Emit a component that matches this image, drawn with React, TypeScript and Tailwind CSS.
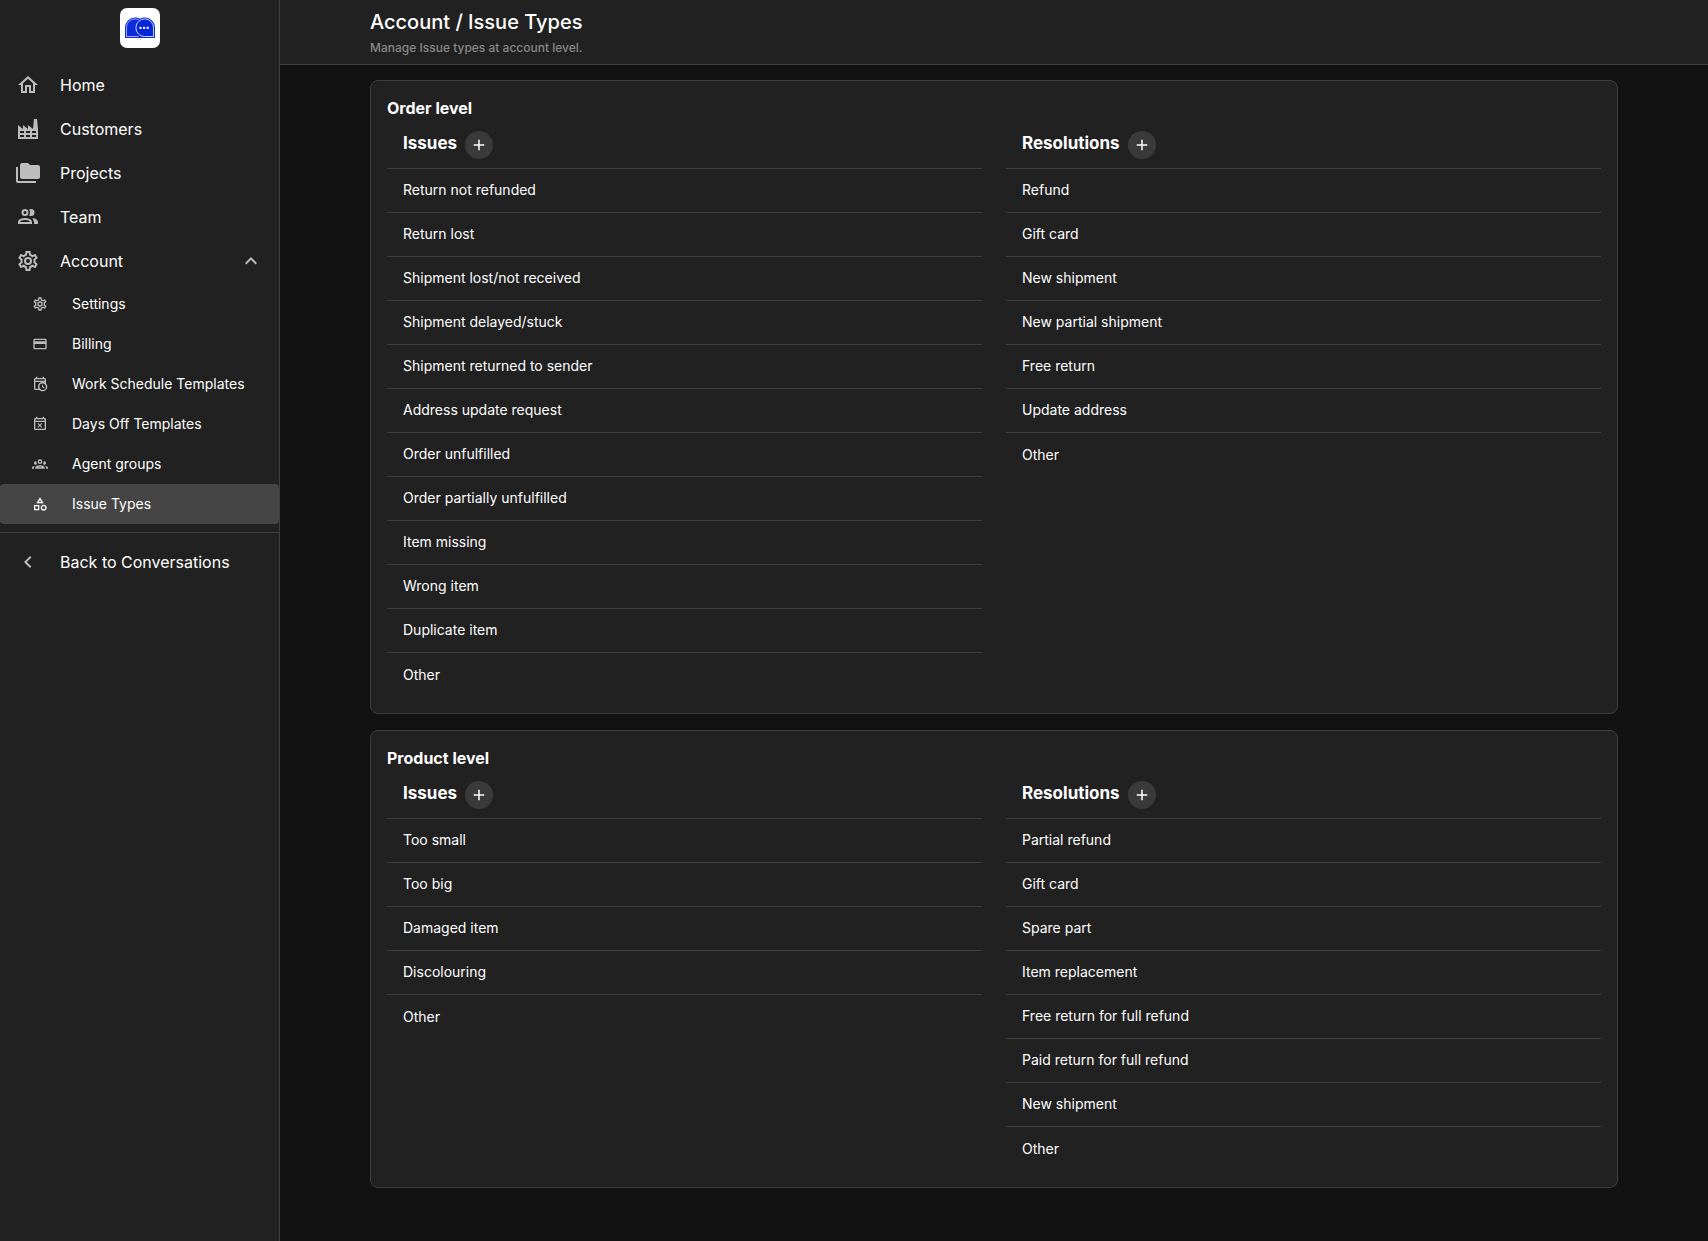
import { useState } from 'react';
import type { ComponentType } from 'react';
import {
  MdAdd,
  MdChevronLeft,
  MdExpandLess,
  MdExpandMore,
  MdOutlineCategory,
  MdOutlineCreditCard,
  MdOutlineEventBusy,
  MdOutlineHome,
} from 'react-icons/md';

type IconProps = { className?: string };
type IconType = ComponentType<IconProps>;

function Icon({ d, className }: IconProps & { d: string }) {
  return (
    <svg viewBox="0 0 24 24" fill="currentColor" className={className} aria-hidden="true">
      <path fillRule="evenodd" d={d} />
    </svg>
  );
}

function FactoryIcon({ className }: IconProps) {
  return (
    <Icon
      className={className}
      d="M4 18v2h4v-2H4m0-4v2h4v-2H4m6 0v2h4v-2h-4m6 0v2h4v-2h-4m-6 4v2h4v-2h-4m6 0v2h4v-2h-4M2 22V8l5 4V8l5 4V8l5 4 1-10h3l1 10v10H2Z"
    />
  );
}

function FoldersIcon({ className }: IconProps) {
  return (
    <Icon
      className={className}
      d="M22 4h-8l-2-2H6a2 2 0 0 0-2 2v12a2 2 0 0 0 2 2h16a2 2 0 0 0 2-2V6a2 2 0 0 0-2-2M2 6H0v14a2 2 0 0 0 2 2h18v-2H2V6Z"
    />
  );
}

function PeopleIcon({ className }: IconProps) {
  return (
    <Icon
      className={className}
      d="M13.07 10.41A5 5 0 0 0 13.07 4.59A3.39 3.39 0 0 1 15 4A3.5 3.5 0 0 1 15 11A3.39 3.39 0 0 1 13.07 10.41M5.5 7.5A3.5 3.5 0 1 1 9 11A3.5 3.5 0 0 1 5.5 7.5M7.5 7.5A1.5 1.5 0 1 0 9 6A1.5 1.5 0 0 0 7.5 7.5M16 17V19H2V17S2 13 9 13 16 17 16 17M14 17C13.86 16.22 12.67 15 9 15S4.07 16.31 4 17M15.95 13A5.32 5.32 0 0 1 18 17V19H22V17S22 13.37 15.94 13Z"
    />
  );
}

function CogIcon({ className }: IconProps) {
  return (
    <Icon
      className={className}
      d="M12 8A4 4 0 0 1 16 12A4 4 0 0 1 12 16A4 4 0 0 1 8 12A4 4 0 0 1 12 8M12 10A2 2 0 0 0 10 12A2 2 0 0 0 12 14A2 2 0 0 0 14 12A2 2 0 0 0 12 10M10 22C9.75 22 9.54 21.82 9.5 21.58L9.13 18.93C8.5 18.68 7.96 18.34 7.44 17.94L4.95 18.95C4.73 19.03 4.46 18.95 4.34 18.73L2.34 15.27C2.21 15.05 2.27 14.78 2.46 14.63L4.57 12.97L4.5 12L4.57 11L2.46 9.37C2.27 9.22 2.21 8.95 2.34 8.73L4.34 5.27C4.46 5.05 4.73 4.96 4.95 5.05L7.44 6.05C7.96 5.66 8.5 5.32 9.13 5.07L9.5 2.42C9.54 2.18 9.75 2 10 2H14C14.25 2 14.46 2.18 14.5 2.42L14.87 5.07C15.5 5.32 16.04 5.66 16.56 6.05L19.05 5.05C19.27 4.96 19.54 5.05 19.66 5.27L21.66 8.73C21.79 8.95 21.73 9.22 21.54 9.37L19.43 11L19.5 12L19.43 13L21.54 14.63C21.73 14.78 21.79 15.05 21.66 15.27L19.66 18.73C19.54 18.95 19.27 19.04 19.05 18.95L16.56 17.95C16.04 18.34 15.5 18.68 14.87 18.93L14.5 21.58C14.46 21.82 14.25 22 14 22H10M11.25 4L10.88 6.61C9.68 6.86 8.62 7.5 7.85 8.39L5.44 7.35L4.69 8.65L6.8 10.2C6.4 11.37 6.4 12.64 6.8 13.8L4.68 15.36L5.43 16.66L7.86 15.62C8.63 16.5 9.68 17.14 10.87 17.38L11.24 20H12.76L13.13 17.39C14.32 17.14 15.37 16.5 16.14 15.62L18.57 16.66L19.32 15.36L17.2 13.81C17.6 12.64 17.6 11.37 17.2 10.2L19.31 8.65L18.56 7.35L16.15 8.39C15.38 7.5 14.32 6.86 13.12 6.62L12.75 4H11.25Z"
    />
  );
}

function CalendarClockIcon({ className }: IconProps) {
  return (
    <Icon
      className={className}
      d="M15 13h1.5v2.82l2.44 1.41-.75 1.3L15 16.69V13m4-4H5v10h4.67c-.43-.91-.67-1.93-.67-3a7 7 0 0 1 7-7c1.07 0 2.09.24 3 .67V9M5 5v2h14V5H5m0 16a2 2 0 0 1-2-2V5c0-1.11.89-2 2-2h1V1h2v2h8V1h2v2h1a2 2 0 0 1 2 2v6.1c1.24 1.26 2 2.99 2 4.9a7 7 0 0 1-7 7c-1.91 0-3.64-.76-4.9-2H5m11-9.85A4.85 4.85 0 0 0 11.15 16c0 2.68 2.17 4.85 4.85 4.85A4.85 4.85 0 0 0 20.85 16c0-2.68-2.17-4.85-4.85-4.85Z"
    />
  );
}

function GroupIcon({ className }: IconProps) {
  return (
    <Icon
      className={className}
      d="M12 5A3.5 3.5 0 0 0 8.5 8.5A3.5 3.5 0 0 0 12 12A3.5 3.5 0 0 0 15.5 8.5A3.5 3.5 0 0 0 12 5M12 7A1.5 1.5 0 0 1 13.5 8.5A1.5 1.5 0 0 1 12 10A1.5 1.5 0 0 1 10.5 8.5A1.5 1.5 0 0 1 12 7M5.5 8A2.5 2.5 0 0 0 3 10.5C3 11.44 3.53 12.25 4.29 12.68C4.65 12.88 5.06 13 5.5 13C5.94 13 6.35 12.88 6.71 12.68C7.08 12.47 7.39 12.17 7.62 11.81C6.89 10.86 6.5 9.7 6.5 8.5V8.22C6.2 8.08 5.86 8 5.5 8M18.5 8C18.14 8 17.8 8.08 17.5 8.22V8.5C17.5 9.7 17.11 10.86 16.38 11.81C16.5 12 16.63 12.15 16.78 12.3C16.94 12.45 17.1 12.58 17.29 12.68C17.65 12.88 18.06 13 18.5 13C18.94 13 19.35 12.88 19.71 12.68C20.47 12.25 21 11.44 21 10.5A2.5 2.5 0 0 0 18.5 8M12 14C9.66 14 5 15.17 5 17.5V19H19V17.5C19 15.17 14.34 14 12 14M4.71 14.55C2.78 14.78 0 15.76 0 17.5V19H3V17.07C3 16.06 3.69 15.22 4.71 14.55M19.29 14.55C20.31 15.22 21 16.06 21 17.07V19H24V17.5C24 15.76 21.22 14.78 19.29 14.55M12 16C13.53 16 15.24 16.5 16.23 17H7.77C8.76 16.5 10.47 16 12 16Z"
    />
  );
}

function Logo() {
  return (
    <svg viewBox="0 0 40 40" className="size-10" role="img" aria-label="Logo">
      <rect width="40" height="40" rx="7" fill="#fff" />
      <path
        d="M5 30V19.5A10 10 0 0 1 15 9.5C17 9.500 18.600 9.900 20 10.600C21.400 9.900 23 9.500 25 9.500A10 10 0 0 1 35 19.500V30Z"
        fill="#0b2bdc"
      />
      <path
        d="M18.500 28.500H6.500V19.500A8.500 8.500 0 0 1 18.500 11.700"
        fill="none"
        stroke="#c5cef8"
        strokeWidth=".8"
      />
      <path
        d="M33.500 28.500H24.500A8.800 8.800 0 1 1 33.500 19.700Z"
        fill="#0624d8"
        stroke="#dfe4fc"
        strokeWidth=".9"
      />
      <g fill="#fff">
        <rect x="19.300" y="18.800" width="2.300" height="2.300" rx=".8" />
        <rect x="22.900" y="18.800" width="2.300" height="2.300" rx=".8" />
        <rect x="26.500" y="18.800" width="2.300" height="2.300" rx=".8" />
      </g>
    </svg>
  );
}

const mainItems: { label: string; icon: IconType }[] = [
  { label: 'Home', icon: MdOutlineHome },
  { label: 'Customers', icon: FactoryIcon },
  { label: 'Projects', icon: FoldersIcon },
  { label: 'Team', icon: PeopleIcon },
];

const accountItems: { label: string; icon: IconType; active?: boolean }[] = [
  { label: 'Settings', icon: CogIcon },
  { label: 'Billing', icon: MdOutlineCreditCard },
  { label: 'Work Schedule Templates', icon: CalendarClockIcon },
  { label: 'Days Off Templates', icon: MdOutlineEventBusy },
  { label: 'Agent groups', icon: GroupIcon },
  { label: 'Issue Types', icon: MdOutlineCategory, active: true },
];

const levels = [
  {
    title: 'Order level',
    issues: [
      'Return not refunded',
      'Return lost',
      'Shipment lost/not received',
      'Shipment delayed/stuck',
      'Shipment returned to sender',
      'Address update request',
      'Order unfulfilled',
      'Order partially unfulfilled',
      'Item missing',
      'Wrong item',
      'Duplicate item',
      'Other',
    ],
    resolutions: [
      'Refund',
      'Gift card',
      'New shipment',
      'New partial shipment',
      'Free return',
      'Update address',
      'Other',
    ],
  },
  {
    title: 'Product level',
    issues: ['Too small', 'Too big', 'Damaged item', 'Discolouring', 'Other'],
    resolutions: [
      'Partial refund',
      'Gift card',
      'Spare part',
      'Item replacement',
      'Free return for full refund',
      'Paid return for full refund',
      'New shipment',
      'Other',
    ],
  },
];

function Sidebar() {
  const [open, setOpen] = useState(true);

  return (
    <aside className="w-70 shrink-0 border-r border-[#3e3e3e] bg-[#212121]">
      <div className="flex justify-center pt-2 pb-4">
        <Logo />
      </div>
      <nav>
        {mainItems.map(({ label, icon: ItemIcon }) => (
          <a key={label} href="#" className="flex h-11 items-center gap-5 px-4 pb-0.5">
            <ItemIcon className="size-6 shrink-0 text-[#bdbdbd]" />
            {label}
          </a>
        ))}
        <button
          onClick={() => setOpen(!open)}
          aria-expanded={open}
          className="flex h-11 w-full items-center gap-5 px-4 pb-0.5"
        >
          <CogIcon className="size-6 shrink-0 text-[#bdbdbd]" />
          <span className="flex-1 text-left">Account</span>
          {open ? (
            <MdExpandLess className="size-6 text-[#bdbdbd]" />
          ) : (
            <MdExpandMore className="size-6 text-[#bdbdbd]" />
          )}
        </button>
        {open && (
          <div className="text-sm">
            {accountItems.map(({ label, icon: ItemIcon, active }) => (
              <a
                key={label}
                href="#"
                className={`flex h-10 items-center gap-6 rounded px-8 whitespace-nowrap ${active ? 'bg-[#454545]' : ''}`}
              >
                <ItemIcon className={`size-4 shrink-0 ${active ? 'text-white' : 'text-[#bdbdbd]'}`} />
                {label}
              </a>
            ))}
          </div>
        )}
        <hr className="my-2 border-[#3e3e3e]" />
        <a href="#" className="flex h-11 items-center gap-5 px-4 pb-0.5">
          <MdChevronLeft className="size-6 shrink-0 text-[#bdbdbd]" />
          Back to Conversations
        </a>
      </nav>
    </aside>
  );
}

function IssueList({ title, items }: { title: string; items: string[] }) {
  return (
    <section className="min-w-0 flex-1">
      <div className="flex h-12 items-start gap-2 border-b border-[#3e3e3e] px-4 pt-2.5">
        <h3 className="text-[17px] leading-6 font-bold">{title}</h3>
        <button
          aria-label={`Add to ${title}`}
          className="flex size-7 items-center justify-center rounded-full bg-[#3a3a3a]"
        >
          <MdAdd className="size-[18px]" />
        </button>
      </div>
      <ul className="text-sm">
        {items.map((item) => (
          <li
            key={item}
            className="flex h-11 items-center border-b border-[#3e3e3e] px-4 pb-0.5 last:border-b-0 last:pb-0"
          >
            {item}
          </li>
        ))}
      </ul>
    </section>
  );
}

export default function App() {
  return (
    <div className="flex min-h-screen bg-[#121212] font-['Inter','Liberation_Sans',sans-serif] text-base text-white">
      <Sidebar />
      <main className="min-w-0 flex-1">
        <header className="border-b border-[#3e3e3e] bg-[#212121]">
          <div className="mx-auto max-w-7xl px-4 py-2">
            <h1 className="text-xl font-medium">Account / Issue Types</h1>
            <p className="mt-1 text-xs font-medium text-[#888888]">Manage Issue types at account level.</p>
          </div>
        </header>
        <div className="mx-auto flex max-w-7xl flex-col gap-4 px-4 pt-[15px] pb-8">
          {levels.map(({ title, issues, resolutions }) => (
            <section key={title} className="rounded-lg border border-[#3e3e3e] bg-[#212121] p-4">
              <h2 className="pb-0.5 leading-[22px] font-bold">{title}</h2>
              <div className="flex gap-6">
                <IssueList title="Issues" items={issues} />
                <IssueList title="Resolutions" items={resolutions} />
              </div>
            </section>
          ))}
        </div>
      </main>
    </div>
  );
}
